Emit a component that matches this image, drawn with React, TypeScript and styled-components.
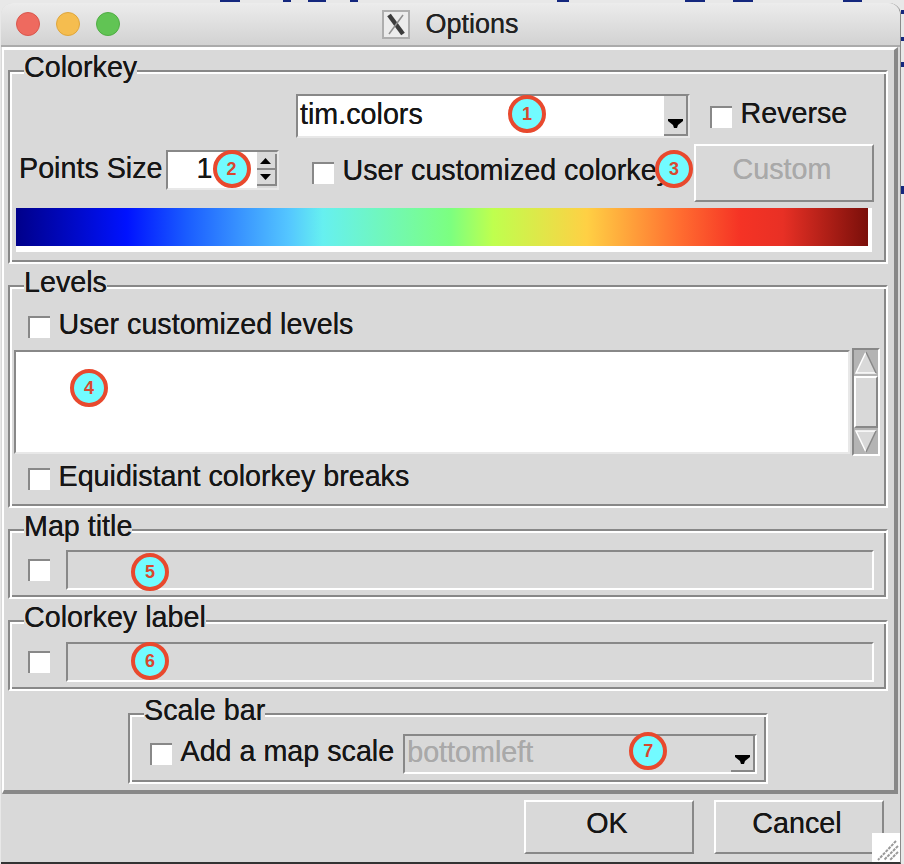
import styled, { createGlobalStyle } from "styled-components";

const GlobalStyle = createGlobalStyle`
  html, body {
    margin: 0;
    padding: 0;
    background: #e8e8e8;
  }

  #root {
    position: relative;
    width: 904px;
    height: 864px;
    overflow: hidden;
  }
`;

const Speck = styled.div<{ $x: number; $y: number; $w: number; $h: number }>`
  position: absolute;
  left: ${(p) => p.$x}px;
  top: ${(p) => p.$y}px;
  width: ${(p) => p.$w}px;
  height: ${(p) => p.$h}px;
  background: #14277e;
`;

const Window = styled.div`
  position: absolute;
  left: 1px;
  top: 3px;
  width: 899px;
  height: 859px;
  display: flex;
  flex-direction: column;
  background: #d9d9d9;
  border-right: 1px solid #8a8a8a;
  border-bottom: 2px solid #333;
  border-radius: 12px 12px 0 0;
  font-family: "Liberation Sans", Arial, sans-serif;
  font-size: 28.7px;
  color: #161616;
  text-shadow: 0 0 0.6px currentColor;
`;

const TitleBar = styled.div`
  height: 42px;
  flex: none;
  position: relative;
  box-sizing: border-box;
  padding-top: 1px;
  display: flex;
  align-items: center;
  justify-content: center;
  gap: 15px;
  background: linear-gradient(#ececec, #d2d2d2);
  border-radius: 12px 12px 0 0;
  font-size: 27px;
  color: #222;
`;

const TitleEdge = styled.div`
  flex: none;
  height: 2px;
  background: #ababab;
`;

const Lights = styled.div`
  position: absolute;
  left: 15px;
  top: 9px;
  display: flex;
  gap: 16px;
`;

const Light = styled.span<{ $fill: string; $edge: string }>`
  width: 24px;
  height: 24px;
  box-sizing: border-box;
  border-radius: 50%;
  background: ${(p) => p.$fill};
  border: 1px solid ${(p) => p.$edge};
`;

const Frame = styled.div`
  height: 747px;
  flex: none;
  box-sizing: border-box;
  margin-left: 1px;
  width: 896px;
  display: flex;
  flex-direction: column;
  padding: 20px 6px 0 4px;
  border-top: 3px solid #fff;
  border-left: 2px solid #fff;
  border-right: 4px solid #888;
  border-bottom: 4px solid #888;
`;

const Group = styled.section<{ $gap?: number; $width?: number; $height?: number; $center?: boolean }>`
  position: relative;
  flex: none;
  box-sizing: border-box;
  margin-bottom: ${(p) => p.$gap ?? 21}px;
  width: ${(p) => (p.$width ? `${p.$width}px` : "auto")};
  height: ${(p) => (p.$height ? `${p.$height}px` : "auto")};
  align-self: ${(p) => (p.$center ? "center" : "stretch")};
  border: 2px solid;
  border-color: #888 #fff #fff #888;
  box-shadow: inset 2px 2px 0 #fff, inset -2px -2px 0 #888;
`;

const Legend = styled.span`
  position: absolute;
  left: 14px;
  top: -20px;
  height: 30px;
  line-height: 30px;
  background: #d9d9d9;
`;

const Row = styled.div<{ $left?: number; $top?: number; $bottom?: number }>`
  position: relative;
  display: flex;
  align-items: center;
  padding-left: ${(p) => p.$left ?? 18}px;
  margin-top: ${(p) => p.$top ?? 0}px;
  margin-bottom: ${(p) => p.$bottom ?? 0}px;
`;

const Label = styled.span<{ $left?: number; $lift?: number }>`
  flex: none;
  margin-left: ${(p) => p.$left ?? 8.5}px;
  padding-bottom: ${(p) => p.$lift ?? 6}px;
  line-height: 34px;
  white-space: nowrap;
`;

const Check = styled.span<{ $left?: number; $down?: number }>`
  flex: none;
  width: 22px;
  height: 22px;
  box-sizing: border-box;
  margin-left: ${(p) => p.$left ?? 0}px;
  margin-top: ${(p) => p.$down ?? 0}px;
  background: #fff;
  border-top: 2px solid #888;
  border-left: 2px solid #888;
`;

const Sunken = styled.div`
  position: relative;
  box-sizing: border-box;
  border: 2px solid;
  border-color: #888 #e8e8e8 #e8e8e8 #888;
`;

const Combo = styled(Sunken)<{ $width: number; $height: number; $left?: number; $off?: boolean }>`
  flex: none;
  width: ${(p) => p.$width}px;
  height: ${(p) => p.$height}px;
  margin-left: ${(p) => p.$left ?? 0}px;
  display: flex;
  align-items: stretch;
  justify-content: space-between;
  background: ${(p) => (p.$off ? "#d9d9d9" : "#fff")};
  border-color: ${(p) => (p.$off ? "#888 #fff #fff #888" : "#888 #e8e8e8 #e8e8e8 #888")};
  color: ${(p) => (p.$off ? "#a9a9a9" : "inherit")};
`;

const ComboText = styled.span<{ $line: number }>`
  padding-left: 2px;
  line-height: ${(p) => p.$line}px;
`;

const DropButton = styled.div`
  flex: none;
  width: 24px;
  box-sizing: border-box;
  display: flex;
  align-items: flex-end;
  justify-content: center;
  padding-bottom: 6px;
  background: #d9d9d9;
  border-right: 2px solid #888;
  border-bottom: 2px solid #888;
`;

const Spin = styled(Sunken)`
  flex: none;
  width: 113px;
  height: 40px;
  margin: -6px 0 0 3px;
  display: flex;
  align-items: stretch;
  background: #fff;
`;

const SpinValue = styled.span`
  width: 90px;
  padding-left: 29px;
  box-sizing: border-box;
  line-height: 32px;
`;

const SpinButtons = styled.div`
  flex: none;
  width: 20px;
  display: flex;
  flex-direction: column;
  justify-content: space-between;
  background: #d9d9d9;
  padding: 2px 0;
`;

const SpinButton = styled.div`
  height: 16px;
  display: flex;
  align-items: center;
  justify-content: center;
  border-right: 2px solid #888;
  border-bottom: 2px solid #888;
`;

const RaisedButton = styled.div<{ $width: number; $height: number; $off?: boolean; $pushed?: boolean }>`
  flex: none;
  width: ${(p) => p.$width}px;
  height: ${(p) => p.$height}px;
  box-sizing: border-box;
  display: flex;
  align-items: center;
  justify-content: center;
  padding: 0 4px 8px 0;
  margin: ${(p) => (p.$pushed ? "0 12px 0 auto" : "0")};
  border: 2px solid;
  border-color: #fff #888 #888 #fff;
  color: ${(p) => (p.$off ? "#a9a9a9" : "inherit")};
`;

const ColorBar = styled.div`
  margin: 6px 0 10px 6px;
  width: 856px;
  box-sizing: border-box;
  height: 44px;
  border-right: 4px solid #fff;
  border-bottom: 6px solid #fff;
  background: linear-gradient(
    90deg,
    #00008a 0%,
    #0012ff 13%,
    #1a5cff 20%,
    #54c6ff 32%,
    #66f0f0 36%,
    #7cff80 51%,
    #bfff4e 56%,
    #ffd044 67%,
    #ff6c30 78%,
    #f53325 85%,
    #e83025 90%,
    #7a0f0a 100%
  );
`;

const LevelsBox = styled.div`
  display: flex;
  align-items: center;
  margin: 1px 0 3px 4px;
`;

const TextArea = styled(Sunken)`
  flex: none;
  width: 836px;
  height: 104px;
  background: #fff;
`;

const ScrollBar = styled.div`
  flex: none;
  width: 28px;
  height: 108px;
  margin-left: 2px;
  box-sizing: border-box;
  display: flex;
  flex-direction: column;
  border: 2px solid;
  border-color: #888 #fff #fff #888;
`;

const ScrollArrow = styled.svg`
  display: block;
  flex: none;
`;

const ScrollThumb = styled.div`
  flex: none;
  height: 52px;
  box-sizing: border-box;
  border: 2px solid;
  border-color: #fff #888 #888 #fff;
`;

const Entry = styled(Sunken)`
  flex: none;
  width: 808px;
  height: 40px;
  margin-left: 16px;
  border-color: #888 #fff #fff #888;
`;

const Badge = styled.span<{ $left: number; $top: number }>`
  position: absolute;
  z-index: 2;
  left: ${(p) => p.$left}px;
  top: ${(p) => p.$top}px;
  width: 38px;
  height: 38px;
  box-sizing: border-box;
  display: flex;
  align-items: center;
  justify-content: center;
  border-radius: 50%;
  border: 4px solid #e8492e;
  background: #72fbff;
  color: #d9472f;
  font-size: 18px;
  font-weight: 700;
  text-shadow: none;
`;

const Footer = styled.div`
  flex: 1;
  display: flex;
  justify-content: flex-end;
  gap: 20px;
  padding: 6px 16px 0 0;
`;

const Grip = styled.svg`
  position: absolute;
  right: 0;
  bottom: 0;
`;

const DropArrow = () => (
  <svg width="15" height="9" viewBox="0 0 15 9">
    <polygon points="0,0 15,0 15,2 10,6 9,9 6,9 5,6 0,2" fill="#000" />
  </svg>
);

const XLogo = () => (
  <svg width="28" height="29" viewBox="0 0 28 29">
    <rect x="1" y="1" width="26" height="27" fill="#ececec" stroke="#aeaeae" strokeWidth="2" />
    <path d="M7 5 L21 24" stroke="#3c3c3c" strokeWidth="4.5" />
    <path d="M21 5 L7 24" stroke="#8e8e8e" strokeWidth="1.5" />
  </svg>
);

const specks = [
  [220, 0, 20, 2],
  [283, 0, 8, 2],
  [308, 0, 18, 2],
  [350, 0, 8, 2],
  [557, 0, 12, 2],
  [685, 0, 20, 2],
  [733, 0, 20, 2],
  [843, 0, 19, 2],
  [901, 10, 3, 4],
  [901, 37, 3, 4],
  [901, 62, 3, 5],
  [901, 186, 3, 8],
];

const App = () => {
  return (
    <>
      <GlobalStyle />
      {specks.map(([x, y, w, h]) => (
        <Speck key={`${x}-${y}`} $x={x} $y={y} $w={w} $h={h} />
      ))}
      <Window>
        <TitleBar>
          <Lights>
            <Light $fill="#ee6a5f" $edge="#d9574d" />
            <Light $fill="#f5bd4f" $edge="#dfa63c" />
            <Light $fill="#61c454" $edge="#50ad44" />
          </Lights>
          <XLogo />
          <span>Options</span>
        </TitleBar>
        <TitleEdge />

        <Frame>
          <Group>
            <Legend>Colorkey</Legend>
            <Row $left={286} $top={22}>
              <Combo $width={394} $height={44}>
                <ComboText $line={36}>tim.colors</ComboText>
                <DropButton>
                  <DropArrow />
                </DropButton>
                <Badge $left={210} $top={-1}>1</Badge>
              </Combo>
              <Check $left={20} $down={2} />
              <Label>Reverse</Label>
            </Row>
            <Row $left={9} $top={6}>
              <Label $left={0} $lift={10}>Points Size</Label>
              <Spin>
                <SpinValue>1</SpinValue>
                <SpinButtons>
                  <SpinButton>
                    <svg width="11" height="6" viewBox="0 0 11 6">
                      <polygon points="5.5,0 11,6 0,6" fill="#000" />
                    </svg>
                  </SpinButton>
                  <SpinButton>
                    <svg width="11" height="6" viewBox="0 0 11 6">
                      <polygon points="0,0 11,0 5.5,6" fill="#000" />
                    </svg>
                  </SpinButton>
                </SpinButtons>
                <Badge $left={45} $top={-2}>2</Badge>
              </Spin>
              <Check $left={33} />
              <Label $left={9}>User customized colorkey</Label>
              <RaisedButton $width={180} $height={58} $off $pushed>
                Custom
              </RaisedButton>
              <Badge $left={645} $top={6}>3</Badge>
            </Row>
            <ColorBar />
          </Group>

          <Group>
            <Legend>Levels</Legend>
            <Row $top={20}>
              <Check />
              <Label>User customized levels</Label>
            </Row>
            <LevelsBox>
              <TextArea>
                <Badge $left={54} $top={17}>4</Badge>
              </TextArea>
              <ScrollBar>
                <ScrollArrow width="24" height="26" viewBox="0 0 24 26">
                  <rect width="24" height="26" fill="#b4b4b4" />
                  <polygon points="12,2 22,23 2,23" fill="#d9d9d9" />
                  <path d="M12 2 L2 23 H22" fill="none" stroke="#fff" strokeWidth="1.5" />
                  <path d="M12 2 L22 23" fill="none" stroke="#888" strokeWidth="1.5" />
                </ScrollArrow>
                <ScrollThumb />
                <ScrollArrow width="24" height="26" viewBox="0 0 24 26">
                  <rect width="24" height="26" fill="#b4b4b4" />
                  <polygon points="2,3 22,3 12,24" fill="#d9d9d9" />
                  <path d="M22 3 H2 L12 24" fill="none" stroke="#fff" strokeWidth="1.5" />
                  <path d="M22 3 L12 24" fill="none" stroke="#888" strokeWidth="1.5" />
                </ScrollArrow>
              </ScrollBar>
            </LevelsBox>
            <Row $bottom={7}>
              <Check />
              <Label>Equidistant colorkey breaks</Label>
            </Row>
          </Group>

          <Group $height={70}>
            <Legend>Map title</Legend>
            <Row $top={19}>
              <Check />
              <Entry>
                <Badge $left={63} $top={1}>5</Badge>
              </Entry>
            </Row>
          </Group>

          <Group $height={71} $gap={22}>
            <Legend>Colorkey label</Legend>
            <Row $top={20}>
              <Check />
              <Entry>
                <Badge $left={63} $top={-2}>6</Badge>
              </Entry>
            </Row>
          </Group>

          <Group $center $width={640} $height={71} $gap={0}>
            <Legend>Scale bar</Legend>
            <Row $left={20} $top={19}>
              <Check />
              <Label $left={8.5}>Add a map scale</Label>
              <Combo $width={354} $height={40} $left={9} $off>
                <ComboText $line={32}>bottomleft</ComboText>
                <DropButton>
                  <DropArrow />
                </DropButton>
                <Badge $left={224} $top={-4}>7</Badge>
              </Combo>
            </Row>
          </Group>
        </Frame>

        <Footer>
          <RaisedButton $width={170} $height={54}>OK</RaisedButton>
          <RaisedButton $width={170} $height={54}>Cancel</RaisedButton>
        </Footer>

        <Grip width="28" height="29" viewBox="0 0 28 29">
          <rect width="28" height="29" fill="#fff" />
          <path d="M24 8 L6 27 M26 13 L12 27 M26 19 L18 27" stroke="#999" strokeWidth="2" strokeDasharray="3 1" />
        </Grip>
      </Window>
    </>
  );
};

export default App;
